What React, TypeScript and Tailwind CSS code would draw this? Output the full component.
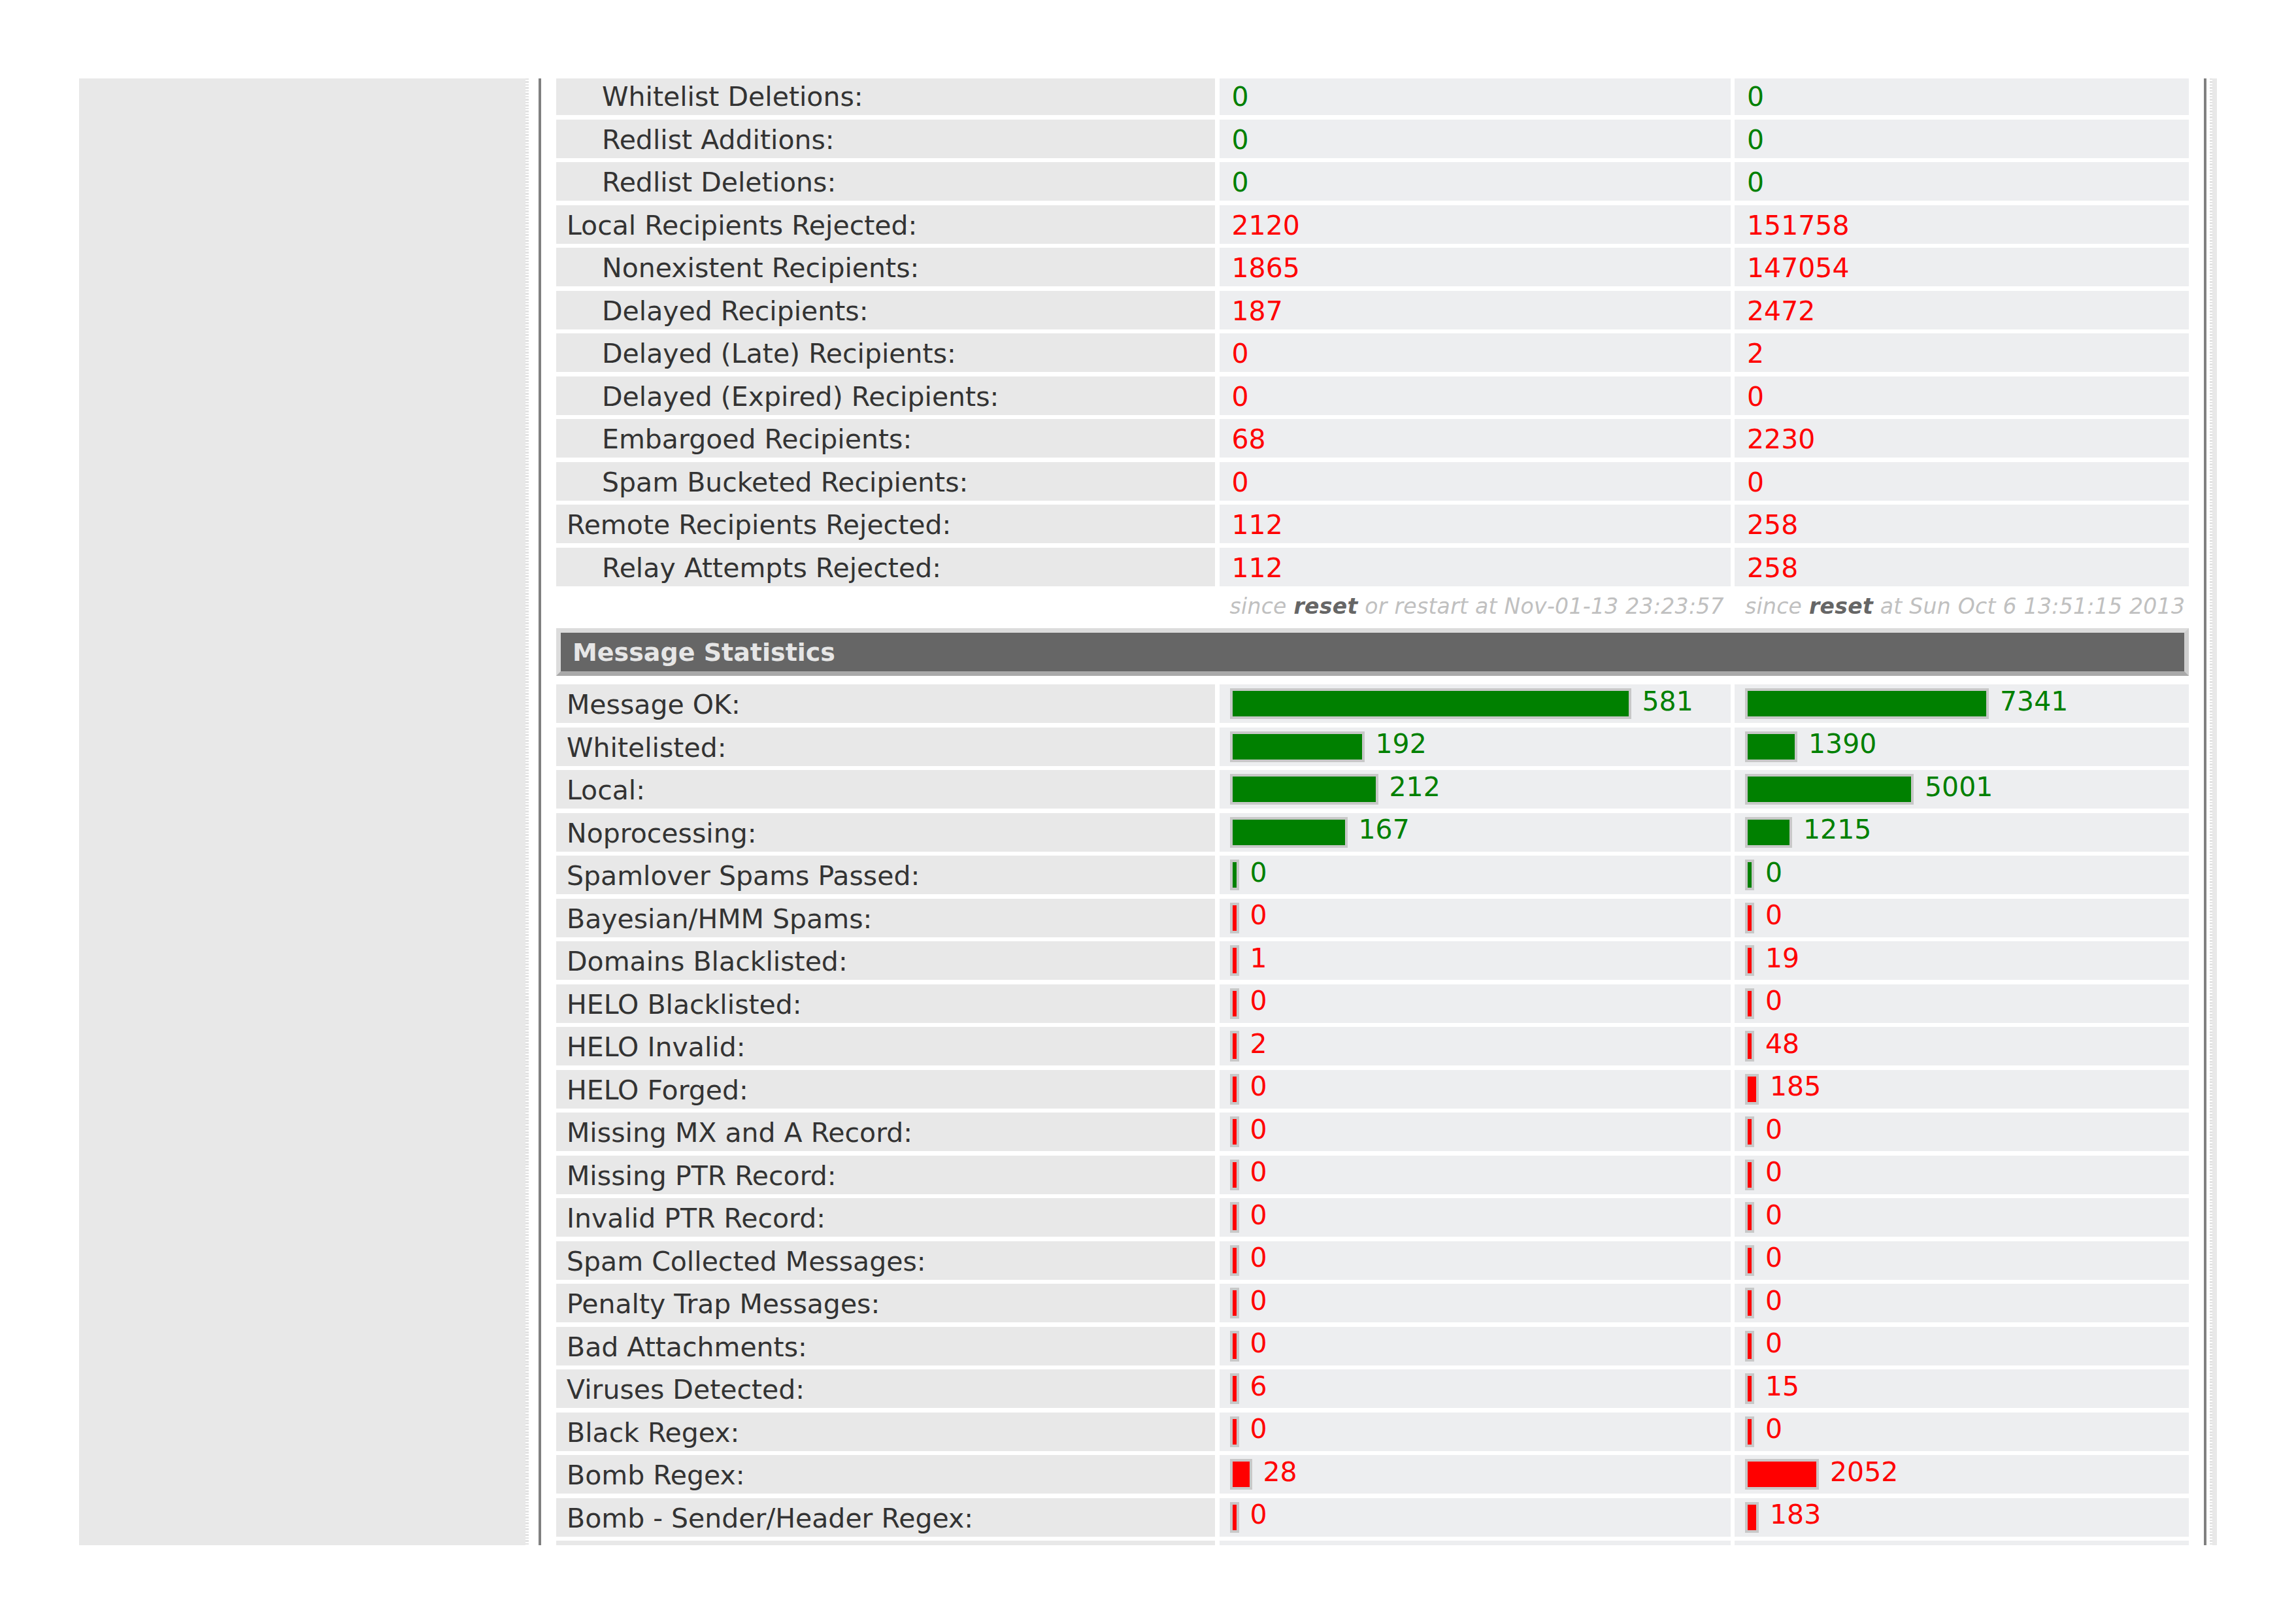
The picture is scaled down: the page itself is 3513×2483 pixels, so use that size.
import React from 'react';

type RecipientRow = { label: string; indent?: boolean; a: string; b: string; ok?: boolean };
type StatRow = { label: string; a: number; b: number; ok?: boolean };

const RECIPIENTS: RecipientRow[] = [
  { label: 'Whitelist Deletions:', indent: true, a: '0', b: '0', ok: true },
  { label: 'Redlist Additions:', indent: true, a: '0', b: '0', ok: true },
  { label: 'Redlist Deletions:', indent: true, a: '0', b: '0', ok: true },
  { label: 'Local Recipients Rejected:', a: '2120', b: '151758' },
  { label: 'Nonexistent Recipients:', indent: true, a: '1865', b: '147054' },
  { label: 'Delayed Recipients:', indent: true, a: '187', b: '2472' },
  { label: 'Delayed (Late) Recipients:', indent: true, a: '0', b: '2' },
  { label: 'Delayed (Expired) Recipients:', indent: true, a: '0', b: '0' },
  { label: 'Embargoed Recipients:', indent: true, a: '68', b: '2230' },
  { label: 'Spam Bucketed Recipients:', indent: true, a: '0', b: '0' },
  { label: 'Remote Recipients Rejected:', a: '112', b: '258' },
  { label: 'Relay Attempts Rejected:', indent: true, a: '112', b: '258' },
];

const STATS: StatRow[] = [
  { label: 'Message OK:', a: 581, b: 7341, ok: true },
  { label: 'Whitelisted:', a: 192, b: 1390, ok: true },
  { label: 'Local:', a: 212, b: 5001, ok: true },
  { label: 'Noprocessing:', a: 167, b: 1215, ok: true },
  { label: 'Spamlover Spams Passed:', a: 0, b: 0, ok: true },
  { label: 'Bayesian/HMM Spams:', a: 0, b: 0 },
  { label: 'Domains Blacklisted:', a: 1, b: 19 },
  { label: 'HELO Blacklisted:', a: 0, b: 0 },
  { label: 'HELO Invalid:', a: 2, b: 48 },
  { label: 'HELO Forged:', a: 0, b: 185 },
  { label: 'Missing MX and A Record:', a: 0, b: 0 },
  { label: 'Missing PTR Record:', a: 0, b: 0 },
  { label: 'Invalid PTR Record:', a: 0, b: 0 },
  { label: 'Spam Collected Messages:', a: 0, b: 0 },
  { label: 'Penalty Trap Messages:', a: 0, b: 0 },
  { label: 'Bad Attachments:', a: 0, b: 0 },
  { label: 'Viruses Detected:', a: 6, b: 15 },
  { label: 'Black Regex:', a: 0, b: 0 },
  { label: 'Bomb Regex:', a: 28, b: 2052 },
  { label: 'Bomb - Sender/Header Regex:', a: 0, b: 183 },
];

const GRID = 'grid shrink-0 grid-cols-[1008px_782px_695px] gap-x-[6.5px]';

function Bar({ value, scale, offset, ok }: { value: number; scale: number; offset: number; ok?: boolean }) {
  const width = Math.max(14, Math.round(offset + value * scale));
  const color = ok ? 'text-[#008000]' : 'text-[#ff0000]';
  return (
    <div className="flex h-full items-center bg-[#edeef0] pl-[16px]">
      <span
        className={`h-[47px] shrink-0 border-4 border-[#c8c8c8] ${ok ? 'bg-[#008000]' : 'bg-[#ff0000]'}`}
        style={{ width }}
      />
      <span className={`ml-[17px] pb-[7px] ${color}`}>{value}</span>
    </div>
  );
}

function Label({ text, indent }: { text: string; indent?: boolean }) {
  return (
    <div className={`flex h-full items-center bg-[#e8e8e8] pt-[4px] text-[#333] ${indent ? 'pl-[70px]' : 'pl-[16px]'}`}>
      {text}
    </div>
  );
}

export default function App() {
  return (
    <div className="h-[2483px] w-[3513px] overflow-hidden bg-white pt-[120px] font-['DejaVu_Sans',sans-serif] text-[41px] leading-none">
      <div className="ml-[121px] flex h-[2244px] overflow-hidden">
        {/* sidebar */}
        <div className="w-[683px] shrink-0 bg-[#e8e8e8]" />
        <div className="w-[5px] shrink-0 bg-[repeating-linear-gradient(to_bottom,#e2e2e2_0px,#e2e2e2_2.5px,#ffffff_2.5px,#ffffff_4.5px)]" />

        {/* main content */}
        <div className="ml-[15px] flex w-[2552px] shrink-0 flex-col overflow-hidden border-x-4 border-[#808080] px-[23px]">
          <div className={`${GRID} -mt-[3px] auto-rows-[59px] gap-y-[6.5px]`}>
            {RECIPIENTS.map((r) => {
              const color = r.ok ? 'text-[#008000]' : 'text-[#ff0000]';
              return (
                <React.Fragment key={r.label}>
                  <Label text={r.label} indent={r.indent} />
                  <div className={`flex items-center bg-[#edeef0] pl-[19px] pt-[4px] ${color}`}>{r.a}</div>
                  <div className={`flex items-center bg-[#edeef0] pl-[19px] pt-[4px] ${color}`}>{r.b}</div>
                </React.Fragment>
              );
            })}
          </div>

          <div className={`${GRID} mt-[6.5px] h-[49px] text-[33px] italic tracking-[0.3px] text-[#c0c0c0]`}>
            <div />
            <div className="flex items-center whitespace-nowrap pl-[16px]">
              since&nbsp;<b className="text-[#666]">reset</b>&nbsp;or restart at Nov-01-13 23:23:57
            </div>
            <div className="flex items-center whitespace-nowrap pl-[16px]">
              since&nbsp;<b className="text-[#666]">reset</b>&nbsp;at Sun Oct 6 13:51:15 2013
            </div>
          </div>

          <div className="mt-[9px] flex h-[73px] shrink-0 items-center border-[7px] border-t-[#dcdcdc] border-l-[#dcdcdc] border-r-[#cfcfcf] border-b-[#a9a9a9] bg-[#666666] pl-[18px] text-[38px] font-bold text-[#e6e6e6]">
            Message Statistics
          </div>

          <div className={`${GRID} mt-[13px] auto-rows-[59px] gap-y-[6.5px]`}>
            {STATS.map((s) => (
              <React.Fragment key={s.label}>
                <Label text={s.label} />
                <Bar value={s.a} scale={1.049} offset={5} ok={s.ok} />
                <Bar value={s.b} scale={0.0492} offset={12} ok={s.ok} />
              </React.Fragment>
            ))}
            {/* next row, cut off by the bottom of the pane */}
            <div className="bg-[#e8e8e8]" />
            <div className="bg-[#edeef0]" />
            <div className="bg-[#edeef0]" />
          </div>
        </div>

        <div className="ml-[5px] w-[4px] shrink-0 bg-[repeating-linear-gradient(to_bottom,#e2e2e2_0px,#e2e2e2_2.5px,#ffffff_2.5px,#ffffff_4.5px)]" />
        <div className="w-[7px] shrink-0 bg-[#e8e8e8]" />
      </div>
    </div>
  );
}
